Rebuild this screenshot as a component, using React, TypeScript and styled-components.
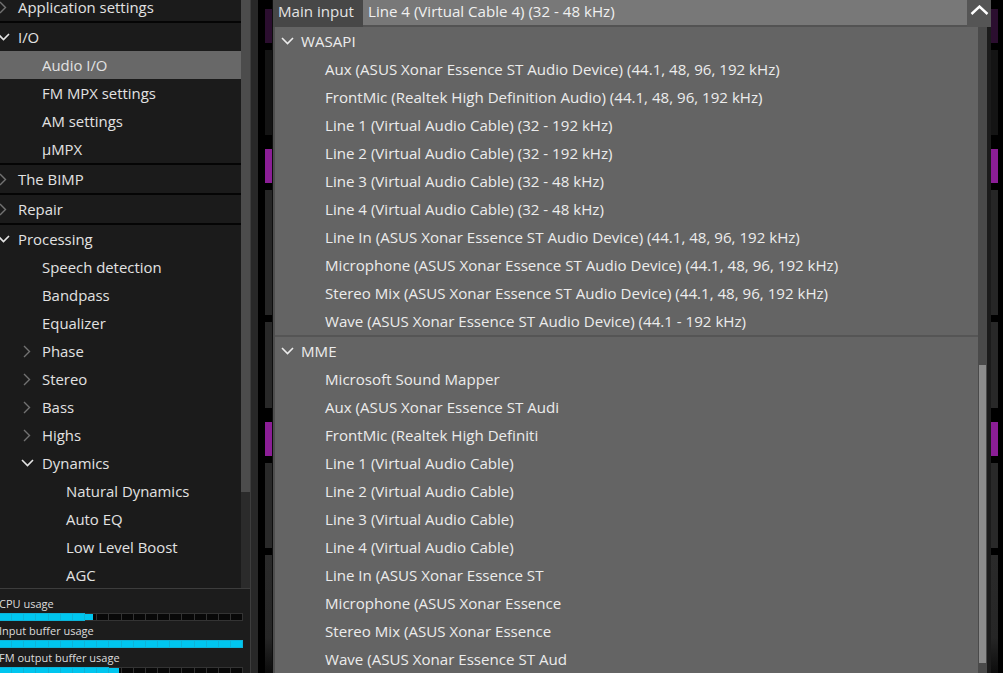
import React from 'react'
import styled, { createGlobalStyle } from 'styled-components'

const GlobalStyle = createGlobalStyle`
  html, body {
    margin: 0;
    padding: 0;
    background: #000;
  }
  body {
    font-family: "Open Sans", "Noto Sans", sans-serif;
  }
  #root {
    width: 1003px;
    height: 673px;
    overflow: hidden;
  }
`

interface TreeNode {
  label: string
  children?: TreeNode[]
  open?: boolean
  selected?: boolean
}

const tree: TreeNode[] = [
  { label: 'Application settings', children: [] },
  {
    label: 'I/O',
    open: true,
    children: [
      { label: 'Audio I/O', selected: true },
      { label: 'FM MPX settings' },
      { label: 'AM settings' },
      { label: 'µMPX' },
    ],
  },
  { label: 'The BIMP', children: [] },
  { label: 'Repair', children: [] },
  {
    label: 'Processing',
    open: true,
    children: [
      { label: 'Speech detection' },
      { label: 'Bandpass' },
      { label: 'Equalizer' },
      { label: 'Phase', children: [] },
      { label: 'Stereo', children: [] },
      { label: 'Bass', children: [] },
      { label: 'Highs', children: [] },
      {
        label: 'Dynamics',
        open: true,
        children: [
          { label: 'Natural Dynamics' },
          { label: 'Auto EQ' },
          { label: 'Low Level Boost' },
          { label: 'AGC' },
        ],
      },
    ],
  },
]

const deviceGroups = [
  {
    name: 'WASAPI',
    items: [
      'Aux (ASUS Xonar Essence ST Audio Device) (44.1, 48, 96, 192 kHz)',
      'FrontMic (Realtek High Definition Audio) (44.1, 48, 96, 192 kHz)',
      'Line 1 (Virtual Audio Cable) (32 - 192 kHz)',
      'Line 2 (Virtual Audio Cable) (32 - 192 kHz)',
      'Line 3 (Virtual Audio Cable) (32 - 48 kHz)',
      'Line 4 (Virtual Audio Cable) (32 - 48 kHz)',
      'Line In (ASUS Xonar Essence ST Audio Device) (44.1, 48, 96, 192 kHz)',
      'Microphone (ASUS Xonar Essence ST Audio Device) (44.1, 48, 96, 192 kHz)',
      'Stereo Mix (ASUS Xonar Essence ST Audio Device) (44.1, 48, 96, 192 kHz)',
      'Wave (ASUS Xonar Essence ST Audio Device) (44.1 - 192 kHz)',
    ],
  },
  {
    name: 'MME',
    items: [
      'Microsoft Sound Mapper',
      'Aux (ASUS Xonar Essence ST Audi',
      'FrontMic (Realtek High Definiti',
      'Line 1 (Virtual Audio Cable)',
      'Line 2 (Virtual Audio Cable)',
      'Line 3 (Virtual Audio Cable)',
      'Line 4 (Virtual Audio Cable)',
      'Line In (ASUS Xonar Essence ST',
      'Microphone (ASUS Xonar Essence',
      'Stereo Mix (ASUS Xonar Essence',
      'Wave (ASUS Xonar Essence ST Aud',
    ],
  },
]

const meters = [
  { label: 'CPU usage', value: 0.388 },
  { label: 'Input buffer usage', value: 1 },
  { label: 'FM output buffer usage', value: 0.49 },
]

// segments of the level meters peeking out from behind the popup
const stripSegments = [
  { h: 9, c: '#000' },
  { h: 34, c: '#2b0e2f' },
  { h: 7, c: '#000' },
  { h: 85, c: '#141414' },
  { h: 14, c: '#000' },
  { h: 34, c: '#8b1e96' },
  { h: 7, c: '#000' },
  { h: 125, c: '#262626' },
  { h: 7, c: '#000' },
  { h: 86, c: '#282828' },
  { h: 14, c: '#000' },
  { h: 34, c: '#8b1e96' },
  { h: 7, c: '#000' },
  { h: 85, c: '#292929' },
  { h: 7, c: '#000' },
]

const ChevronRight = () => (
  <svg width="8" height="13" viewBox="0 0 8 13">
    <polyline points="1,1 6.5,6.5 1,12" fill="none" stroke="#727272" strokeWidth="1.4" />
  </svg>
)

const ChevronDown = ({ color = '#e4e4e4' }: { color?: string }) => (
  <svg width="13" height="8" viewBox="0 0 13 8">
    <polyline points="1,1 6.5,6.5 12,1" fill="none" stroke={color} strokeWidth="1.6" />
  </svg>
)

const ChevronUp = () => (
  <svg width="19" height="10" viewBox="0 0 19 10">
    <polyline points="1.5,9 9.5,1.5 17.5,9" fill="none" stroke="#fff" strokeWidth="2.4" />
  </svg>
)

function TreeRows({ nodes, level }: { nodes: TreeNode[], level: number }) {
  return (
    <>
      {nodes.map((node) => (
        <React.Fragment key={node.label}>
          <Row $selected={!!node.selected}>
            <IconBox $level={level}>
              {node.children && (node.open ? <ChevronDown /> : <ChevronRight />)}
            </IconBox>
            <span>{node.label}</span>
          </Row>
          {node.open && node.children && <TreeRows nodes={node.children} level={level + 1} />}
        </React.Fragment>
      ))}
    </>
  )
}

function Meter({ label, value }: { label: string, value: number }) {
  const cells = 20
  return (
    <MeterBlock>
      <MeterLabel>{label}</MeterLabel>
      <Bar>
        {Array.from({ length: cells }).map((_, i) => {
          const fill = Math.max(0, Math.min(1, value * cells - i))
          return <Cell key={i} $fill={fill} />
        })}
      </Bar>
    </MeterBlock>
  )
}

function MeterStripColumn() {
  return (
    <Strip>
      {stripSegments.map((s, i) => (
        <Segment key={i} $h={s.h} $c={s.c} />
      ))}
      <StripTail />
    </Strip>
  )
}

export default function App() {
  return (
    <>
      <GlobalStyle />
      <Stage>
        <Sidebar>
          <TreePanel>
            <TreeBody>
              <TreeScroll>
                {tree.map((group) => (
                  <TopGroup key={group.label}>
                    <TreeRows nodes={[group]} level={0} />
                  </TopGroup>
                ))}
              </TreeScroll>
            </TreeBody>
            <SideScrollbar>
              <SideThumb />
            </SideScrollbar>
          </TreePanel>
          <MeterPanel>
            {meters.map((m) => (
              <Meter key={m.label} label={m.label} value={m.value} />
            ))}
          </MeterPanel>
        </Sidebar>
        <Gutter />
        <BlackGap $w={7} />
        <MeterStripColumn />
        <Main>
          <Popup>
            <ComboHeader>
              <ComboLabel>Main input</ComboLabel>
              <ComboValue>Line 4 (Virtual Cable 4) (32 - 48 kHz)</ComboValue>
              <ComboButton>
                <ChevronUp />
              </ComboButton>
            </ComboHeader>
            <ListFrame>
              <ListItems>
                {deviceGroups.map((g) => (
                  <DeviceGroup key={g.name}>
                    <GroupHeader>
                      <GroupIcon>
                        <ChevronDown color="#ececec" />
                      </GroupIcon>
                      {g.name}
                    </GroupHeader>
                    {g.items.map((item) => (
                      <DeviceItem key={item}>{item}</DeviceItem>
                    ))}
                  </DeviceGroup>
                ))}
              </ListItems>
              <ListScrollbar>
                <ListThumb />
              </ListScrollbar>
              <ListEdge />
            </ListFrame>
          </Popup>
        </Main>
        <MeterStripColumn />
        <BlackGap $w={5} />
      </Stage>
    </>
  )
}

const Stage = styled.div`
  display: flex;
  width: 1003px;
  height: 673px;
  background: #000;
  overflow: hidden;
`

const Sidebar = styled.div`
  width: 251px;
  flex-shrink: 0;
  display: flex;
  flex-direction: column;
`

const TreePanel = styled.div`
  height: 588px;
  flex-shrink: 0;
  display: flex;
  background: #1b1b1b;
  border-bottom: 1px solid #3d3d3d;
  border-right: 1px solid #3d3d3d;
  overflow: hidden;
`

const TreeBody = styled.div`
  width: 241px;
  overflow: hidden;
`

const TreeScroll = styled.div`
  margin-top: -7px;
`

const TopGroup = styled.div`
  border-bottom: 2px solid #050505;

  &:last-child {
    border-bottom: none;
  }
`

const Row = styled.div<{ $selected: boolean }>`
  display: flex;
  align-items: center;
  height: 28px;
  font-size: 14.9px;
  color: #e2e2e2;
  white-space: nowrap;
  background: ${(p) => (p.$selected ? '#686868' : 'transparent')};
`

const IconBox = styled.div<{ $level: number }>`
  width: 16px;
  height: 16px;
  flex-shrink: 0;
  margin-left: ${(p) => p.$level * 24 - 5}px;
  margin-right: 7px;
  display: flex;
  align-items: center;
  justify-content: center;
`

const SideScrollbar = styled.div`
  width: 9px;
  display: flex;
  flex-direction: column;
  background: #2b2b2b;
`

const SideThumb = styled.div`
  height: 492px;
  background: #4c4c4c;
`

const MeterPanel = styled.div`
  flex: 1;
  min-height: 0;
  overflow: hidden;
  background: #1c1c1c;
  padding-top: 8px;
  border-right: 1px solid #3d3d3d;
`

const MeterBlock = styled.div`
  display: flex;
  flex-direction: column;
  width: 243px;
  margin-bottom: 3px;
`

const MeterLabel = styled.div`
  font-size: 11px;
  line-height: 13px;
  color: #dcdcdc;
  margin-left: -1px;
  margin-bottom: 3px;
  white-space: nowrap;
`

const Bar = styled.div`
  display: flex;
  height: 8px;
  background: #050505;
`

const Cell = styled.div<{ $fill: number }>`
  flex: 1;
  box-sizing: border-box;
  border: 1px solid ${(p) => (p.$fill >= 1 ? '#0cb3d8' : '#333')};
  border-left: none;
  background: ${(p) =>
    `linear-gradient(to right, #00c6ef ${p.$fill * 100}%, #080808 ${p.$fill * 100}%)`};
`

const Gutter = styled.div`
  width: 7px;
  flex-shrink: 0;
  background: #282828;
`

const BlackGap = styled.div<{ $w: number }>`
  width: ${(p) => p.$w}px;
  flex-shrink: 0;
  background: #000;
`

const Strip = styled.div`
  width: 7px;
  flex-shrink: 0;
  display: flex;
  flex-direction: column;
`

const Segment = styled.div<{ $h: number, $c: string }>`
  height: ${(p) => p.$h}px;
  flex-shrink: 0;
  background: ${(p) => p.$c};
`

const StripTail = styled.div`
  flex: 1;
  background: linear-gradient(#2a2a2a 0%, #262626 70%, #0c0c0c 100%);
`

const Main = styled.div`
  flex: 1;
  min-width: 0;
  background: #0e0e0e;
  overflow: hidden;
  display: flex;
  flex-direction: column;
`

const Popup = styled.div`
  width: 718px;
  margin: -4px 0 0 1px;
  display: flex;
  flex-direction: column;
  flex: 1;
  min-height: 0;
  font-size: 15.1px;
`

const ComboHeader = styled.div`
  display: flex;
  height: 31px;
  flex-shrink: 0;
`

const ComboLabel = styled.div`
  width: 90px;
  box-sizing: border-box;
  padding: 0 0 2px 5px;
  display: flex;
  align-items: center;
  background: #474747;
  color: #e4e4e4;
  white-space: nowrap;
`

const ComboValue = styled.div`
  flex: 1;
  box-sizing: border-box;
  padding-left: 5px;
  display: flex;
  align-items: center;
  background: #787878;
  border-bottom: 2px solid #535353;
  color: #f0f0f0;
  white-space: nowrap;
`

const ComboButton = styled.div`
  width: 24px;
  box-sizing: border-box;
  padding-top: 2px;
  padding-bottom: 6px;
  display: flex;
  align-items: center;
  justify-content: center;
  background: #555;
`

const ListFrame = styled.div`
  flex: 1;
  min-height: 0;
  display: flex;
  border-left: 2px solid #4e4e4e;
`

const ListItems = styled.div`
  flex: 1;
  min-width: 0;
  background: #646464;
  overflow: hidden;
`

const DeviceGroup = styled.div`
  border-bottom: 2px solid #555;

  &:last-child {
    border-bottom: none;
  }
`

const GroupHeader = styled.div`
  display: flex;
  align-items: center;
  height: 28px;
  padding-left: 6px;
  color: #ececec;
  white-space: nowrap;
`

const GroupIcon = styled.div`
  width: 13px;
  margin-right: 7px;
  display: flex;
  align-items: center;
  justify-content: center;
`

const DeviceItem = styled.div`
  height: 28px;
  line-height: 28px;
  padding-left: 50px;
  color: #ececec;
  white-space: nowrap;
`

const ListScrollbar = styled.div`
  width: 9px;
  flex-shrink: 0;
  background: #4a4a4a;
  display: flex;
  flex-direction: column;
`

const ListThumb = styled.div`
  margin: 338px 1px 0 1px;
  height: 298px;
  background: #8c8c8c;
`

const ListEdge = styled.div`
  width: 4px;
  flex-shrink: 0;
  background: #1b1b1b;
`
